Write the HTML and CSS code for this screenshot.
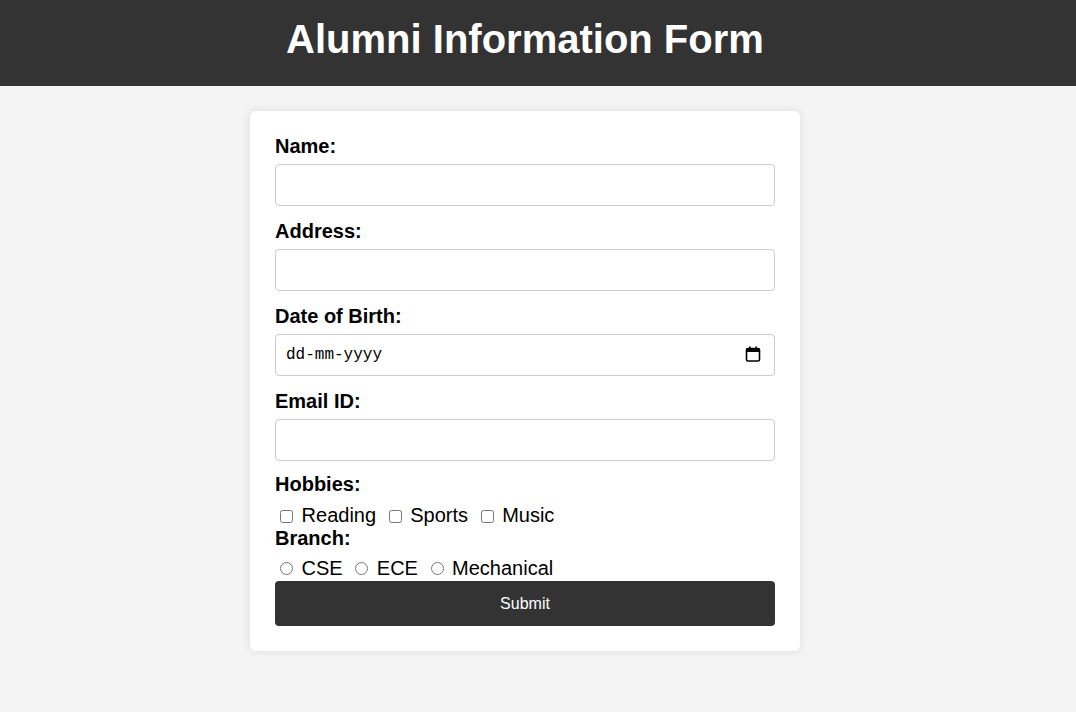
FILE: index.html
```html
<!DOCTYPE html>
<html lang="en">
<head>
<meta charset="utf-8">
<title>Alumni Information Form</title>
<link rel="stylesheet" href="styles.css">
</head>
<body>
<header class="site-header">
  <h1 class="site-title">Alumni Information Form</h1>
</header>
<main class="page">
  <form class="card">
    <label class="field-label" for="name">Name:</label>
    <input class="field-input" type="text" id="name">

    <label class="field-label" for="address">Address:</label>
    <input class="field-input" type="text" id="address">

    <label class="field-label" for="dob">Date of Birth:</label>
    <div class="date-wrap">
      <input class="field-input date-input" type="text" id="dob" placeholder="dd-mm-yyyy">
      <svg class="cal-icon" width="16" height="16" viewBox="0 0 16 16" aria-hidden="true">
        <rect x="1.5" y="2.5" width="13" height="12.5" rx="1.5" fill="none" stroke="#000" stroke-width="1.6"/>
        <rect x="1.5" y="2.5" width="13" height="3.5" fill="#000"/>
        <rect x="4" y="0.5" width="1.6" height="3" fill="#000"/>
        <rect x="10.4" y="0.5" width="1.6" height="3" fill="#000"/>
      </svg>
    </div>

    <label class="field-label" for="email">Email ID:</label>
    <input class="field-input field-input-last" type="email" id="email">

    <label class="field-label">Hobbies:</label>
    <div class="options">
      <input type="checkbox" id="reading"> <label for="reading">Reading</label>
      <input type="checkbox" id="sports"> <label for="sports">Sports</label>
      <input type="checkbox" id="music"> <label for="music">Music</label>
    </div>

    <label class="field-label">Branch:</label>
    <div class="options radios">
      <input type="radio" name="branch" id="cse"> <label for="cse">CSE</label>
      <input type="radio" name="branch" id="ece"> <label for="ece">ECE</label>
      <input type="radio" name="branch" id="mech"> <label for="mech">Mechanical</label>
    </div>

    <button class="submit-btn" type="button">Submit</button>
  </form>
</main>
</body>
</html>
```
FILE: styles.css
```css
html, body {
  margin: 0;
  padding: 0;
}
body {
  background: #f4f4f4;
  font-family: "Liberation Sans", Arial, sans-serif;
  color: #000;
}
.site-header {
  background: #333;
  color: #fff;
  padding: 16px 26px 24px 0;
  text-align: center;
}
.site-title {
  margin: 0;
  font-size: 40px;
  font-weight: bold;
  line-height: 46px;
}
.page {
  padding: 25px 26px 40px 0;
}
.card {
  box-sizing: border-box;
  width: 550px;
  margin: 0 auto;
  background: #fff;
  padding: 24px 25px 25px;
  border-radius: 6px;
  box-shadow: 0 0 10px rgba(0, 0, 0, 0.1);
}
.field-label {
  display: block;
  font-size: 20px;
  font-weight: bold;
  line-height: 23px;
  margin-bottom: 6px;
}
.field-input {
  display: block;
  box-sizing: border-box;
  width: 100%;
  height: 42px;
  margin: 0 0 14px;
  padding: 10px;
  border: 1px solid #ccc;
  border-radius: 4px;
  font-family: "Liberation Sans", Arial, sans-serif;
  font-size: 16px;
  background: #fff;
  outline: none;
}
.field-input-last {
  margin-bottom: 12px;
}
.date-wrap {
  position: relative;
}
.date-input {
  padding-left: 10px;
  font-family: "Liberation Mono", "DejaVu Sans Mono", monospace;
  font-size: 16px;
}
.date-input::placeholder {
  color: #000;
  opacity: 1;
}
.cal-icon {
  position: absolute;
  right: 14px;
  top: 12px;
}
.options {
  font-size: 20px;
  line-height: 23px;
  margin: 0;
  padding-top: 2px;
}
.options label {
  margin-right: 2px;
}
.options input {
  margin: 3px 3px 3px 5px;
  width: 13px;
  height: 13px;
  vertical-align: -1px;
}
.radios {
  padding-top: 1px;
  padding-bottom: 1px;
}
.radios input {
  margin: 3px 3px 0 5px;
  vertical-align: 0;
}
.submit-btn {
  display: block;
  width: 100%;
  height: 45px;
  border: none;
  border-radius: 4px;
  background: #333;
  color: #fff;
  font-family: "Liberation Sans", Arial, sans-serif;
  font-size: 16px;
  cursor: pointer;
}
```
